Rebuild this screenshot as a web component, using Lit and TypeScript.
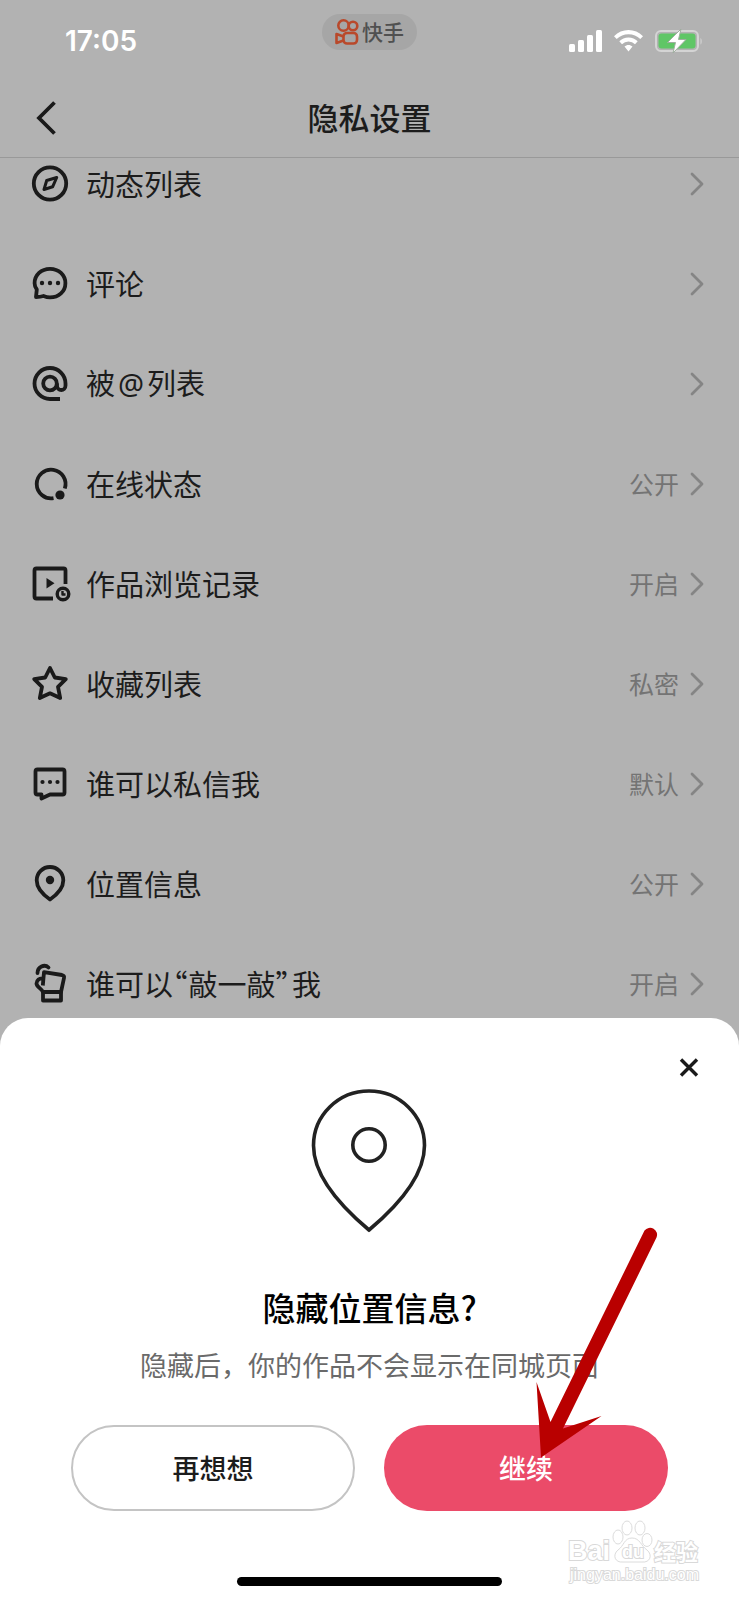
import { LitElement, html, css, svg } from "lit";
import { customElement, property } from "lit/decorators.js";

const icons: Record<string, unknown> = {
  compass: svg`<circle cx="20" cy="19.500" r="16.200"/><path d="M26.700 13.500 22.600 22.800 14 25.500 16.700 16.500Z" stroke-width="3"/>`,
  comment: svg`<path d="M20 4.800C28.800 4.800 35.400 11 35.400 19.200S28.800 33.400 20 33.400c-2.500 0-4.500-.6-6.500-1.400-2.300.8-4.500 1-7.500 1l.8-7.500C5.300 23.500 4.600 21.500 4.600 19.200 4.600 11 11.200 4.800 20 4.800Z"/><g class="dots"><circle cx="12" cy="19" r="2.200"/><circle cx="20" cy="19" r="2.200"/><circle cx="28" cy="19" r="2.200"/></g>`,
  at: svg`<path d="M30 35H20A15.500 15.500 0 1 1 35.500 19.500V21.500C35.500 27.500 27 27.500 27 21.500V19.500"/><circle cx="20" cy="19.500" r="6.800"/>`,
  online: svg`<path d="M23.500 34.200A14.400 14.400 0 1 1 34.800 24.500"/><circle class="fill" cx="30" cy="31" r="4.600"/>`,
  history: svg`<path d="M23 34.500H6.500a2 2 0 0 1-2-2v-26a2 2 0 0 1 2-2h27a2 2 0 0 1 2 2V20"/><path class="fill" d="M16.500 14v10.500l8-5.200Z"/><circle cx="33" cy="30" r="5.800" stroke-width="3.400"/><path d="M32.500 27v3.500H35.500" stroke-width="2.400"/>`,
  star: svg`<path d="M20 4 24.800 13.500 35.800 15.200 28 22.800 30.200 34 20 29.300 9.800 34 12 22.800 4.200 15.200 15.200 13.500Z"/>`,
  message: svg`<path d="M7.500 5.500h25a2 2 0 0 1 2 2v21a2 2 0 0 1-2 2H20l-8.500 4V30.500h-4a2 2 0 0 1-2-2v-21a2 2 0 0 1 2-2Z"/><g class="dots"><circle cx="12.500" cy="18" r="2.100"/><circle cx="20" cy="18" r="2.100"/><circle cx="27.500" cy="18" r="2.100"/></g>`,
  pin: svg`<path d="M20 37.500C12 32 6.700 25.500 6.700 18.300a13.300 13.300 0 0 1 26.600 0C33.300 25.500 28 32 20 37.500Z" transform="translate(0 -2)"/><circle class="fill" cx="20" cy="16" r="4.200"/>`,
  knock: svg`<path d="M7.500 9C7.500 3 14.500-.500 18.500 3.500" stroke-linecap="round"/><path d="M12.800 21.500 14 8.200 32 11Q34.500 11.500 34 14L31 28H13C11.500 24.500 6.500 23 6.500 19.500 6.500 16.500 9.500 13.500 13.300 14.500"/><path d="M13 28h18v8.500H13Z"/>`,
};

@customElement("setting-row")
export class SettingRow extends LitElement {
  @property() icon = "";
  @property() value = "";

  static styles = css`
    :host { display: block; }
    .row {
      display: flex;
      align-items: center;
      width: 100%;
      height: 100px;
      box-sizing: border-box;
      padding: 0 35px 0 30px;
      border: 0;
      background: none;
      font: inherit;
      color: #1c1c1c;
      text-align: left;
    }
    .icon {
      width: 40px;
      height: 40px;
      flex: none;
      overflow: visible;
      fill: none;
      stroke: #1a1a1a;
      stroke-width: 3.800;
      stroke-linejoin: round;
    }
    .icon .fill, .icon .dots { fill: #1a1a1a; stroke: none; }
    .label, .value { padding-bottom: 3px; }
    .label { flex: 1; padding-left: 16px; font-size: 29px; line-height: 40px; }
    .value { padding-right: 11px; font-size: 25px; line-height: 36px; color: #747474; }
    .chevron { width: 14px; height: 24px; flex: none; fill: none; stroke: #858585; stroke-width: 2.800; stroke-linecap: round; stroke-linejoin: round; }
  `;

  render() {
    return html`<button class="row" type="button">
      <svg class="icon" viewBox="0 0 40 40" aria-hidden="true">${icons[this.icon]}</svg>
      <span class="label"><slot></slot></span>
      <span class="value">${this.value}</span>
      <svg class="chevron" viewBox="0 0 14 24" aria-hidden="true"><path d="M2 2 12 12 2 22"/></svg>
    </button>`;
  }
}

@customElement("app-root")
export class AppRoot extends LitElement {
  static styles = css`
    :host {
      display: block;
      position: relative;
      min-height: 100vh;
      overflow: hidden;
      background: #b2b2b2;
      font-family: "Noto Sans CJK SC", sans-serif;
      color: #1c1c1c;
    }
    button { font: inherit; cursor: pointer; }
    .header { position: relative; z-index: 1; background: #b2b2b2; border-bottom: 1px solid #999; }
    .status {
      display: grid;
      grid-template-columns: 1fr auto 1fr;
      align-items: center;
      height: 80px;
      padding: 0 36px 0 65px;
      color: #fff;
    }
    .time { padding-top: 2px; font: 600 28px/36px Inter, sans-serif; }
    .app-pill {
      display: flex;
      align-items: center;
      gap: 3px;
      align-self: start;
      height: 36px;
      margin: 14px 29px 0 0;
      padding: 0 13px;
      border-radius: 18px;
      background: #a6a6a6;
      color: #505050;
      font-size: 21px;
      line-height: 30px;
      font-weight: 500;
    }
    .pill-name { padding-bottom: 2px; }
    .app-logo { width: 24px; height: 26px; fill: none; stroke: #b9492b; stroke-width: 2.600; stroke-linejoin: round; }
    .indicators { display: flex; align-items: center; justify-content: flex-end; gap: 12px; padding-top: 1px; }
    .signal { width: 33px; height: 22px; fill: #fff; }
    .wifi { width: 29px; height: 22px; fill: #fff; }
    .battery { width: 48px; height: 24px; }
    .nav { display: grid; grid-template-columns: 60px 1fr 60px; align-items: center; height: 77px; padding: 0 16px; }
    .back { padding: 0 0 2px 20px; border: 0; background: none; height: 60px; }
    .back svg { display: block; width: 20px; height: 34px; fill: none; stroke: #1a1a1a; stroke-width: 3.800; }
    .title { margin: 0; padding-bottom: 4px; font-size: 31px; line-height: 44px; font-weight: 500; text-align: center; }
    .list { margin-top: -24px; }
    .at { margin: 0 3px; font-family: "Noto Sans", sans-serif; }
    .open, .shut { font-feature-settings: "halt"; }
    .open { margin-right: 1px; }
    .shut { margin-right: 2px; }
    .sheet {
      position: absolute;
      z-index: 2;
      left: 0;
      right: 0;
      bottom: 0;
      display: flex;
      flex-direction: column;
      align-items: center;
      padding: 71px 71px 14px;
      border-radius: 28px 28px 0 0;
      background: #fff;
    }
    .close { position: absolute; top: 30px; right: 30px; width: 40px; height: 40px; padding: 0; border: 0; background: none; }
    .close svg { display: block; width: 40px; height: 40px; stroke: #1a1a1a; stroke-width: 3.400; }
    .big-pin { width: 117px; height: 144px; fill: none; stroke: #222; stroke-width: 3.600; }
    .question { margin: 52px 0 0; font-size: 33px; line-height: 44px; font-weight: 500; color: #000; }
    .note { margin: 16px 0 0; font-size: 27px; line-height: 40px; color: #6a6a6a; white-space: nowrap; }
    .actions { position: relative; display: grid; grid-template-columns: 1fr 1fr; gap: 29px; align-self: stretch; margin-top: 40px; }
    .action { height: 86px; padding-bottom: 3px; border-radius: 43px; font-size: 27px; font-weight: 500; }
    .later { border: 2px solid #c4c4c4; background: #fff; color: #1c1c1c; }
    .go { border: 0; background: #eb4b69; color: #fff; }
    .arrow { position: absolute; right: 10px; bottom: 53px; width: 122px; height: 232px; fill: #b90000; pointer-events: none; }
    .home { width: 265px; height: 9px; margin-top: 66px; border-radius: 5px; background: #000; }
    .watermark { position: absolute; right: 38px; bottom: 16px; width: 134px; height: 66px; overflow: visible; pointer-events: none; }
    .watermark text { fill: #fff; stroke: #d9d9d9; stroke-width: 2; paint-order: stroke; }
    .watermark .paw { fill: #fff; stroke: #dcdcdc; stroke-width: 1; }
    .brand { font: 700 27px "Liberation Sans", sans-serif; }
    .du { font: 700 18px "Liberation Sans", sans-serif; }
    .jingyan { font: 700 22px "Noto Sans CJK SC", sans-serif; }
    .site { font: 400 16px "Liberation Sans", sans-serif; }
  `;

  render() {
    return html`
      <header class="header">
        <div class="status">
          <span class="time">17:05</span>
          <div class="app-pill">
            <svg class="app-logo" viewBox="0 0 24 26" aria-hidden="true">
              <circle cx="8.500" cy="6.500" r="5.200"/><circle cx="18" cy="7" r="4.300"/>
              <rect x="8.500" y="14" width="13.500" height="10.500" rx="3.500"/><path d="M8.500 17.500 1.500 15v9L8.500 21.500"/>
            </svg>
            <span class="pill-name">快手</span>
          </div>
          <div class="indicators">
            <svg class="signal" viewBox="0 0 33 22" role="img" aria-label="信号"><rect y="14" width="6" height="8" rx="1.500"/><rect x="9" y="10" width="6" height="12" rx="1.500"/><rect x="18" y="5" width="6" height="17" rx="1.500"/><rect x="27" width="6" height="22" rx="1.500"/></svg>
            <svg class="wifi" viewBox="0 0 29 22" role="img" aria-label="Wi-Fi"><path d="M14.500 0C20 0 25 2.200 29 6.200L26.300 9A17 17 0 0 0 2.700 9L0 6.200C4 2.200 9 0 14.500 0ZM14.500 7.500c3.600 0 6.800 1.400 9.200 3.800L21 14.200a9.300 9.300 0 0 0-13 0L5.300 11.300C7.700 8.900 10.900 7.500 14.500 7.500ZM14.500 15c1.500 0 2.900.6 4 1.600L14.500 21.500 10.500 16.600c1.100-1 2.500-1.600 4-1.600Z"/></svg>
            <svg class="battery" viewBox="0 0 48 24" role="img" aria-label="充电中">
              <rect x="1" y="2" width="42" height="20" rx="5" fill="none" stroke="#d4d4d4" stroke-width="2"/>
              <path d="M45.500 9c1.600.6 1.600 6 0 6.600Z" fill="#d4d4d4"/>
              <rect x="3.500" y="4.500" width="37" height="15" rx="3" fill="#5fc666"/>
              <path d="M26 0 12.500 13.500H20.500L18 24 31 10.500H23.500Z" fill="#fff" stroke="#9fae9f" stroke-width="1"/>
            </svg>
          </div>
        </div>
        <nav class="nav">
          <button class="back" type="button" aria-label="返回"><svg viewBox="0 0 20 34"><path d="M18.500 1.500 3 17 18.500 32.500"/></svg></button>
          <h1 class="title">隐私设置</h1>
        </nav>
      </header>
      <main class="list">
        <setting-row icon="compass">动态列表</setting-row>
        <setting-row icon="comment">评论</setting-row>
        <setting-row icon="at">被<span class="at">@</span>列表</setting-row>
        <setting-row icon="online" value="公开">在线状态</setting-row>
        <setting-row icon="history" value="开启">作品浏览记录</setting-row>
        <setting-row icon="star" value="私密">收藏列表</setting-row>
        <setting-row icon="message" value="默认">谁可以私信我</setting-row>
        <setting-row icon="pin" value="公开">位置信息</setting-row>
        <setting-row icon="knock" value="开启">谁可以<span class="open">“</span>敲一敲<span class="shut">”</span>我</setting-row>
      </main>
      <section class="sheet" role="dialog" aria-labelledby="question">
        <button class="close" type="button" aria-label="关闭"><svg viewBox="0 0 40 40"><path d="M12 11.500 28 27.500M28 11.500 12 27.500"/></svg></button>
        <svg class="big-pin" viewBox="0 0 117 144" aria-hidden="true">
          <path d="M58 141C27 115 2.500 86 2.500 56.500a55.500 54.500 0 0 1 111 0C113.500 86 89 115 58 141Z"/><circle cx="58" cy="56" r="16.200"/>
        </svg>
        <h2 class="question" id="question">隐藏位置信息?</h2>
        <p class="note">隐藏后，你的作品不会显示在同城页面</p>
        <div class="actions">
          <button class="action later" type="button">再想想</button>
          <button class="action go" type="button">继续</button>
          <svg class="arrow" viewBox="0 0 122 232" aria-hidden="true">
            <path d="M108.500 4.500A7 7 0 0 1 120.500 11.500L27 202.500 65.500 190 5 231.500.500 156 14.500 196Z"/>
          </svg>
        </div>
        <div class="home"></div>
        <svg class="watermark" viewBox="0 0 134 66">
          <text class="brand" x="1" y="42">Bai</text>
          <g class="paw">
            <ellipse cx="51" cy="19" rx="5" ry="7"/><ellipse cx="60" cy="10" rx="5" ry="7"/><ellipse cx="73" cy="10" rx="5" ry="7"/><ellipse cx="80" cy="22" rx="5" ry="6.500"/>
            <path d="M65 20C57 20 57 28 51 32 45 37 48 45 56 44H75C83 45 86 37 80 32 74 28 73 20 65 20Z"/>
          </g>
          <text class="du" x="55" y="40">du</text>
          <text class="jingyan" x="87" y="42">经验</text>
          <text class="site" x="3" y="62">jingyan.baidu.com</text>
        </svg>
      </section>
    `;
  }
}
